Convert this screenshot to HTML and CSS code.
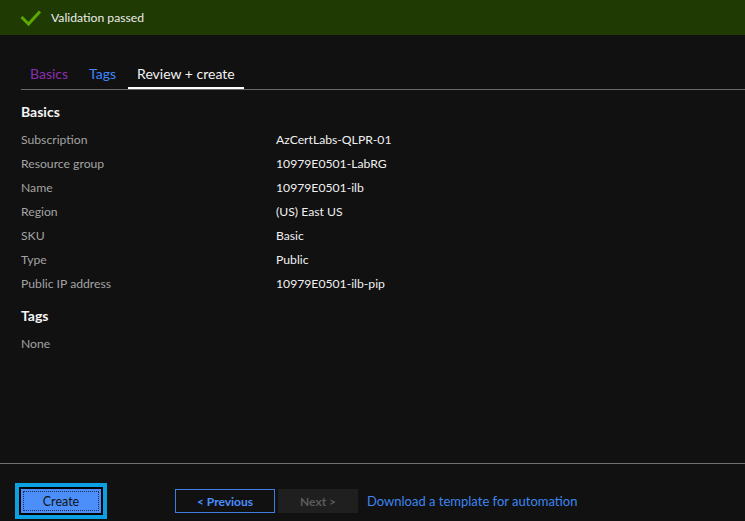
FILE: index.html
```html
<!DOCTYPE html>
<html lang="en">
<head>
<meta charset="utf-8">
<title>Review + create</title>
<link rel="stylesheet" href="styles.css">
</head>
<body>
<div class="page">
  <div class="banner">
    <svg class="check" width="22" height="18" viewBox="0 0 22 18"><polyline points="1.5,8 8.5,15 20,2.5" fill="none" stroke="#5aa800" stroke-width="3"/></svg>
    <span class="banner-text">Validation passed</span>
  </div>
  <div class="tabs">
    <span class="tab visited">Basics</span>
    <span class="tab link">Tags</span>
    <span class="tab active">Review + create</span>
  </div>
  <main class="content">
    <h2 class="section-title">Basics</h2>
    <div class="rows">
      <div class="label">Subscription</div><div class="value">AzCertLabs-QLPR-01</div>
      <div class="label">Resource group</div><div class="value">10979E0501-LabRG</div>
      <div class="label">Name</div><div class="value">10979E0501-ilb</div>
      <div class="label">Region</div><div class="value">(US) East US</div>
      <div class="label">SKU</div><div class="value">Basic</div>
      <div class="label">Type</div><div class="value">Public</div>
      <div class="label">Public IP address</div><div class="value">10979E0501-ilb-pip</div>
    </div>
    <h2 class="section-title tags-title">Tags</h2>
    <div class="rows">
      <div class="label">None</div>
    </div>
  </main>
  <footer class="footer">
    <button class="btn-create"><span class="focus">Create</span></button>
    <button class="btn-prev">&lt; Previous</button>
    <button class="btn-next">Next &gt;</button>
    <a class="download">Download a template for automation</a>
  </footer>
</div>
</body>
</html>
```
FILE: styles.css
```css
html, body {
  margin: 0;
  padding: 0;
  background: #111111;
}
body {
  font-family: Lato, "Open Sans", sans-serif;
  font-size: 12px;
  color: #e8e8e8;
}
.page {
  height: 521px;
  display: flex;
  flex-direction: column;
  overflow: hidden;
}
.banner {
  height: 35px;
  background: #1f3a03;
  display: flex;
  align-items: center;
  padding-left: 20px;
  box-sizing: border-box;
}
.check {
  display: block;
}
.banner-text {
  margin-left: 9px;
  color: #ececec;
  font-size: 12.2px;
}
.tabs {
  display: flex;
  margin: 29px 0 0 21px;
  border-bottom: 1px solid #6a6a6a;
}
.tab {
  padding: 0 9px 3px;
  line-height: 20px;
  font-size: 14px;
  border-bottom: 2px solid transparent;
  margin-right: 3px;
}
.tab.visited { color: #8a2fb0; }
.tab.link { color: #3f86ff; }
.tab.active { color: #f2f2f2; border-bottom-color: #ffffff; }
.content {
  flex: 1;
  padding-left: 21px;
}
.section-title {
  margin: 12px 0 5px;
  font-size: 14px;
  font-weight: 700;
  line-height: 20px;
  color: #f4f4f4;
}
.tags-title {
  margin-top: 11px;
}
.rows {
  display: grid;
  grid-template-columns: 255px auto;
  grid-auto-rows: 24px;
  align-items: center;
  font-size: 12.2px;
}
.label { color: #a3a3a3; }
.value { color: #f0f0f0; }
.footer {
  border-top: 1px solid #707070;
  height: 58px;
  display: flex;
  align-items: flex-start;
  padding: 25px 0 0 21px;
  box-sizing: border-box;
}
button {
  font-family: inherit;
  font-size: 12px;
  height: 24px;
  padding: 0;
  cursor: pointer;
}
.btn-create {
  width: 80px;
  background: #4c8ffb;
  border: none;
  color: #111;
  box-shadow: 0 0 0 2px #000, 0 0 0 6px #0aa0e2;
  display: flex;
  align-items: stretch;
  justify-content: stretch;
  padding: 2px;
  font-size: 12.5px;
}
.btn-create .focus {
  flex: 1;
  border: 1px dotted #1d2c55;
  display: flex;
  align-items: center;
  justify-content: center;
}
.btn-prev {
  margin-left: 74px;
  width: 100px;
  background: transparent;
  border: 1px solid #3c7fe0;
  color: #4a8fff;
  font-weight: 700;
}
.btn-next {
  margin-left: 3px;
  width: 80px;
  background: #1f1f1f;
  border: none;
  color: #5b5b5b;
  font-weight: 700;
}
.download {
  margin-left: 9px;
  line-height: 24px;
  color: #3d86f0;
  font-size: 13px;
}
```
